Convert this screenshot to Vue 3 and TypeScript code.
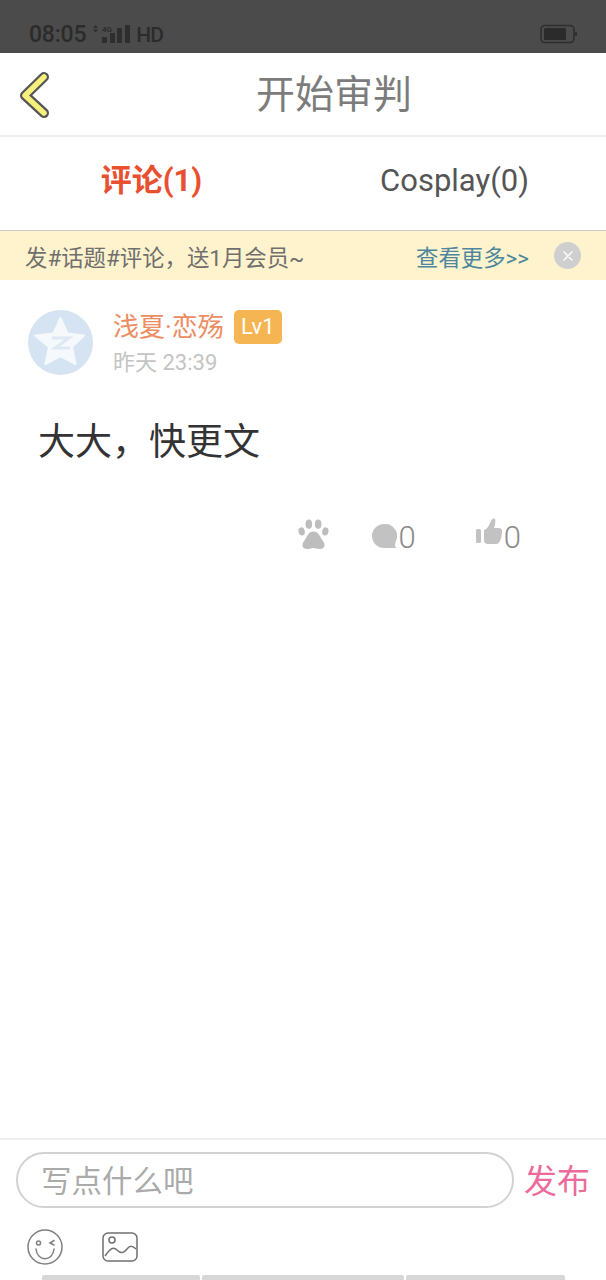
<script setup lang="ts">
const navSegments: number[] = [158, 202, 159]
</script>

<template>
  <div class="page">
    <header class="status">
      <div class="status-left">
        <span class="clock">08:05</span>
        <svg class="signal" width="39" height="20" viewBox="0 0 39 20">
          <path d="M1 4 3.500 1 6 4ZM1 5.500 3.500 8.500 6 5.500Z" fill="#2e2e2e" />
          <text x="10" y="7.500" class="four-g">4G</text>
          <rect x="10" y="13" width="5" height="6" fill="#2e2e2e" />
          <rect x="18" y="9" width="5" height="10" fill="#2e2e2e" />
          <rect x="25" y="4" width="5" height="15" fill="#2e2e2e" />
          <rect x="33" y="1" width="5" height="18" fill="#2e2e2e" />
        </svg>
        <span class="hd">HD</span>
      </div>
      <svg class="battery" width="38" height="20" viewBox="0 0 38 20">
        <rect x="1" y="1.500" width="33" height="17" rx="4" fill="none" stroke="#2e2e2e" stroke-width="1.600" />
        <rect x="4" y="4" width="22" height="12" rx="1.500" fill="#2b2b2b" />
        <rect x="35" y="8" width="2" height="4" rx="1" fill="#2e2e2e" />
      </svg>
    </header>

    <nav class="title-bar">
      <svg class="back" width="34" height="50" viewBox="0 0 34 50">
        <path d="M26 7 7 25.500 26 43" fill="none" stroke="#555" stroke-width="10" stroke-linecap="round" stroke-linejoin="round" />
        <path d="M26 7 7 25.500 26 43" fill="none" stroke="#f7f07c" stroke-width="5.500" stroke-linecap="round" stroke-linejoin="round" />
      </svg>
      <h1 class="title">开始审判</h1>
    </nav>

    <div class="tabs">
      <div class="tab tab-active">评论(1)</div>
      <div class="tab">Cosplay(0)</div>
    </div>

    <div class="notice">
      <span class="notice-text">发#话题#评论，送1月会员~</span>
      <span class="notice-more">查看更多&gt;&gt;</span>
      <span class="notice-close">
        <svg width="10" height="10" viewBox="0 0 10 10">
          <path d="M1 1 9 9M9 1 1 9" stroke="#fff" stroke-width="1.400" stroke-linecap="round" />
        </svg>
      </span>
    </div>

    <main class="content">
      <section class="comment">
        <div class="author">
          <svg class="avatar" width="65" height="65" viewBox="0 0 65 65">
            <circle cx="32.500" cy="32.500" r="32.500" fill="#d6e3f2" />
            <path d="M32.500 8 39.500 23.500 56 25.500 44 37 47.500 54 32.500 46 17.500 54 21 37 7 25.500 25.500 23.500Z" fill="#f6f9fc" stroke="#f6f9fc" stroke-width="2" stroke-linejoin="round" />
            <path d="M24 28H41L27 38H42" fill="none" stroke="#dfe8f3" stroke-width="3" />
          </svg>
          <div class="author-info">
            <div class="name-row">
              <span class="name">浅夏·恋殇</span>
              <span class="level">Lv1</span>
            </div>
            <div class="time">昨天 23:39</div>
          </div>
        </div>
        <p class="body">大大，快更文</p>
        <div class="actions">
          <svg class="paw" width="31" height="33" viewBox="0 0 30 32">
            <ellipse cx="3.500" cy="13" rx="3" ry="4" fill="#bdbdbd" transform="rotate(-15 3.500 13)" />
            <ellipse cx="10.500" cy="6" rx="3.200" ry="4.500" fill="#bdbdbd" />
            <ellipse cx="19.500" cy="6" rx="3.200" ry="4.500" fill="#bdbdbd" />
            <ellipse cx="26.500" cy="13" rx="3" ry="4" fill="#bdbdbd" transform="rotate(15 26.500 13)" />
            <path d="M15 13C10 13 9 18 6 22C3 26 4 30 9 30C12 30 13 29 15 29C17 29 18 30 21 30C26 30 27 26 24 22C21 18 20 13 15 13Z" fill="#bdbdbd" />
          </svg>
          <span class="action action-comment">
            <svg class="bubble-icon" width="26" height="26" viewBox="0 0 26 26">
              <path d="M13 1A12 12 0 1 0 13 25H25.500C23.500 23.500 24 21.500 24.500 19A12 12 0 0 0 13 1Z" fill="#c2c2c2" />
            </svg>
            <span class="count">0</span>
          </span>
          <span class="action action-like">
            <svg class="like-icon" width="26" height="26" viewBox="0 0 26 26">
              <rect x="0" y="11" width="5" height="14" rx="1.500" fill="#c2c2c2" />
              <path d="M8 12C11 11 13 8 14 5C15 2 17 0 18.500 .5C20 1.500 19.500 5 18 10H23C25.500 10 26.500 12 26 15C25 21 24 26 20 26H12C9 26 8 24 8 22Z" fill="#c2c2c2" />
            </svg>
            <span class="count">0</span>
          </span>
        </div>
      </section>
    </main>

    <footer class="composer">
      <div class="input-row">
        <div class="input">写点什么吧</div>
        <span class="publish">发布</span>
      </div>
      <div class="tools">
        <svg width="36" height="36" viewBox="0 0 36 36" fill="none" stroke="#808080" stroke-width="1.500">
          <circle cx="18" cy="18" r="17" />
          <circle cx="11.500" cy="14" r="2" />
          <path d="M27 11.500 23 14 27 16M9 20C10 33 26 33 27 20" stroke-linecap="round" />
        </svg>
        <svg width="36" height="30" viewBox="0 0 36 30" fill="none" stroke="#707070" stroke-width="1.500">
          <rect x="1" y="1" width="34" height="28" rx="5" />
          <circle cx="10" cy="8" r="3" />
          <path d="M3 24C8 17 11 14 15 18C19 22 22 21 25 17C28 13 31 14 34 17" />
        </svg>
      </div>
      <div class="gesture">
        <span v-for="(width, index) in navSegments" :key="index" class="gesture-part" :style="{ width: width + 'px' }"></span>
      </div>
    </footer>
  </div>
</template>

<style>
html, body { margin: 0; background: #fff; }
</style>

<style scoped>
.page {
  width: 606px;
  height: 1280px;
  display: flex;
  flex-direction: column;
  background: #fff;
  font-family: Roboto, "Noto Sans CJK SC", sans-serif;
  overflow: hidden;
}
.status {
  height: 53px;
  flex: none;
  box-sizing: border-box;
  padding: 22px 29px 0;
  display: flex;
  justify-content: space-between;
  background: #4b4b4b;
  color: #2b2b2b;
}
.status-left { display: flex; align-items: flex-start; }
.clock { font: 500 23px/26px Roboto, sans-serif; letter-spacing: -.2px; }
.signal { margin: 2px 0 0 6px; }
.four-g { font: bold 8px Roboto, sans-serif; fill: #2e2e2e; }
.hd { margin-left: 5px; font: 500 21px/26px Roboto, sans-serif; letter-spacing: -1px; }
.battery { margin: 2px -1px 0 0; }
.title-bar {
  height: 84px;
  flex: none;
  box-sizing: border-box;
  border-bottom: 2px solid #eeeeee;
  padding-left: 18px;
  display: grid;
  grid-template-columns: 34px 1fr;
  align-items: center;
}
.back { margin-top: 1px; }
.title {
  margin: 1px 0 0 10px;
  font-size: 39px;
  line-height: 46px;
  font-weight: 400;
  color: #7c7c7c;
  text-align: center;
}
.tabs {
  height: 94px;
  flex: none;
  box-sizing: border-box;
  padding-bottom: 6px;
  border-bottom: 1px solid #c9c9cc;
  display: grid;
  grid-template-columns: 303px 303px;
  align-items: center;
  text-align: center;
  font-size: 31px;
  color: #555;
}
.tab-active { margin-bottom: 6px; color: #e8502f; font-weight: 700; }
.notice {
  height: 49px;
  flex: none;
  display: flex;
  align-items: center;
  padding: 0 25px;
  background: #fef3cc;
  font-size: 22.4px;
  color: #6f6f6f;
}
.notice-text { flex: 1; }
.notice-more { color: #4d879f; }
.notice-close {
  width: 27px;
  height: 27px;
  margin: 0 0 0 25px;
  display: flex;
  align-items: center;
  justify-content: center;
  border-radius: 50%;
  background: #cfcfcf;
}
.content { flex: 1; min-height: 0; }
.comment { padding: 30px 85px 0 28px; }
.author { display: flex; gap: 20px; }
.avatar { flex: none; }
.name-row { display: flex; align-items: center; gap: 10px; height: 34px; }
.name { font-size: 26px; color: #ec8d63; line-height: 34px; }
.level {
  width: 48px;
  height: 34px;
  border-radius: 5px;
  background: #f5b553;
  color: #fff;
  font: 22px/34px Roboto, sans-serif;
  text-align: center;
}
.time { margin-top: 4px; font-size: 22px; line-height: 30px; color: #c4c4c4; }
.body {
  margin: 38px 0 0 10px;
  font-size: 37px;
  line-height: 54px;
  color: #333;
}
.actions {
  margin-top: 50px;
  display: flex;
  justify-content: flex-end;
  align-items: center;
}
.paw { margin-top: -8px; }
.action { display: flex; align-items: center; gap: 2px; }
.action-comment { margin-left: 42px; }
.action-like { margin-left: 60px; }
.bubble-icon { margin-top: -4px; }
.like-icon { margin-top: -14px; }
.count { font: 300 31px/36px Roboto, sans-serif; color: #8b8b8b; }
.composer { flex: none; height: 142px; border-top: 2px solid #eeeeee; box-sizing: border-box; }
.input-row { display: flex; align-items: center; padding: 12px 0 0 16px; }
.input {
  width: 498px;
  height: 56px;
  box-sizing: border-box;
  padding: 4px 0 0 23px;
  border: 2px solid #d2d2d2;
  border-radius: 28px;
  font-size: 30.5px;
  line-height: 48px;
  color: #aaaaaa;
}
.publish { margin-left: 10px; padding-top: 4px; font-size: 33px; line-height: 52px; color: #ec6b9d; }
.tools { display: flex; align-items: center; gap: 39px; padding: 21px 0 0 27px; }
.gesture { margin: 10px 0 0 42px; display: flex; gap: 2px; }
.gesture-part { height: 5px; background: #d7d7d7; border-radius: 2px 2px 0 0; }
</style>
